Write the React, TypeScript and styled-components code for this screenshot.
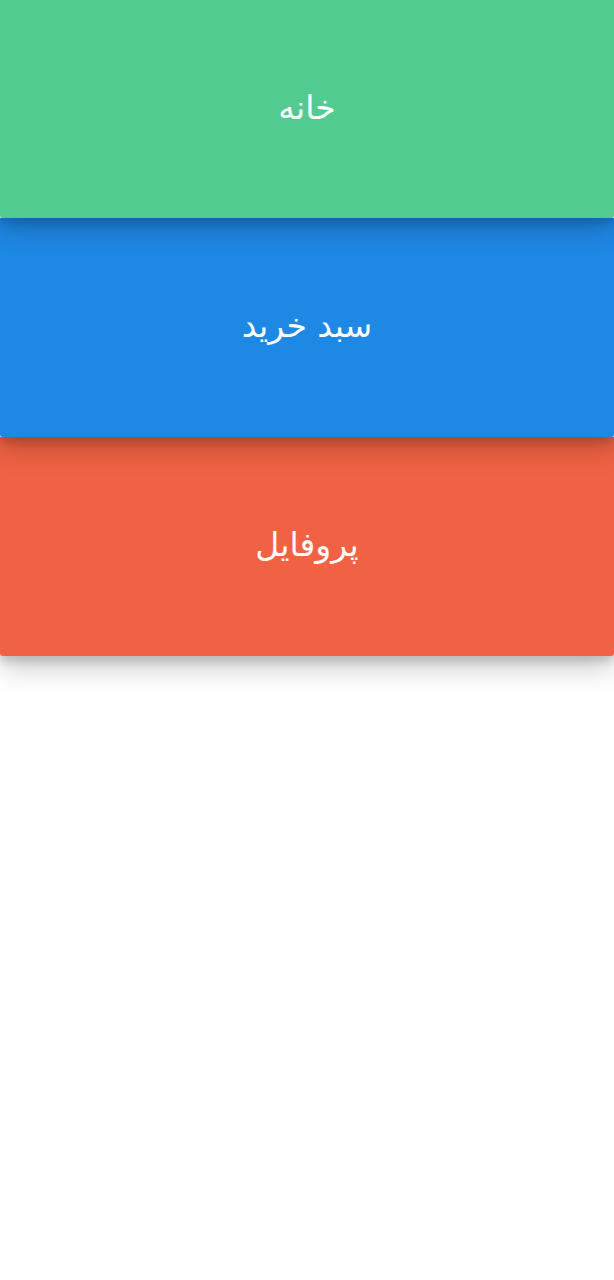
import React from "react";
import styled, { createGlobalStyle } from "styled-components";

const GlobalStyle = createGlobalStyle`
  html, body {
    margin: 0;
    padding: 0;
    background: #ffffff;
  }
  body {
    font-family: "DejaVu Sans", "Noto Sans", sans-serif;
  }
`;

const Menu = styled.div`
  display: flex;
  flex-direction: column;
  direction: rtl;
  padding-bottom: 40px;
`;

const Card = styled.a<{ $color: string; $layer: number; $height: number }>`
  position: relative;
  z-index: ${(p) => p.$layer};
  display: flex;
  align-items: center;
  justify-content: center;
  height: ${(p) => p.$height}px;
  background: ${(p) => p.$color};
  color: #ffffff;
  border-radius: 0 0 3px 3px;
  box-shadow: 0 12px 28px rgba(0, 0, 0, 0.2), 0 6px 8px rgba(0, 0, 0, 0.14);
  text-decoration: none;
  font-size: 33px;
  padding-bottom: 4px;
  box-sizing: border-box;
`;

const items = [
  { label: "خانه", color: "#52cb91", height: 218 },
  { label: "سبد خرید", color: "#1e88e5", height: 219 },
  { label: "پروفایل", color: "#f06243", height: 219 },
];

const App: React.FC = () => {
  return (
    <>
      <GlobalStyle />
      <Menu>
        {items.map((item, i) => (
          <Card
            key={item.label}
            $color={item.color}
            $layer={items.length - i}
            $height={item.height}
          >
            {item.label}
          </Card>
        ))}
      </Menu>
    </>
  );
};

export default App;
